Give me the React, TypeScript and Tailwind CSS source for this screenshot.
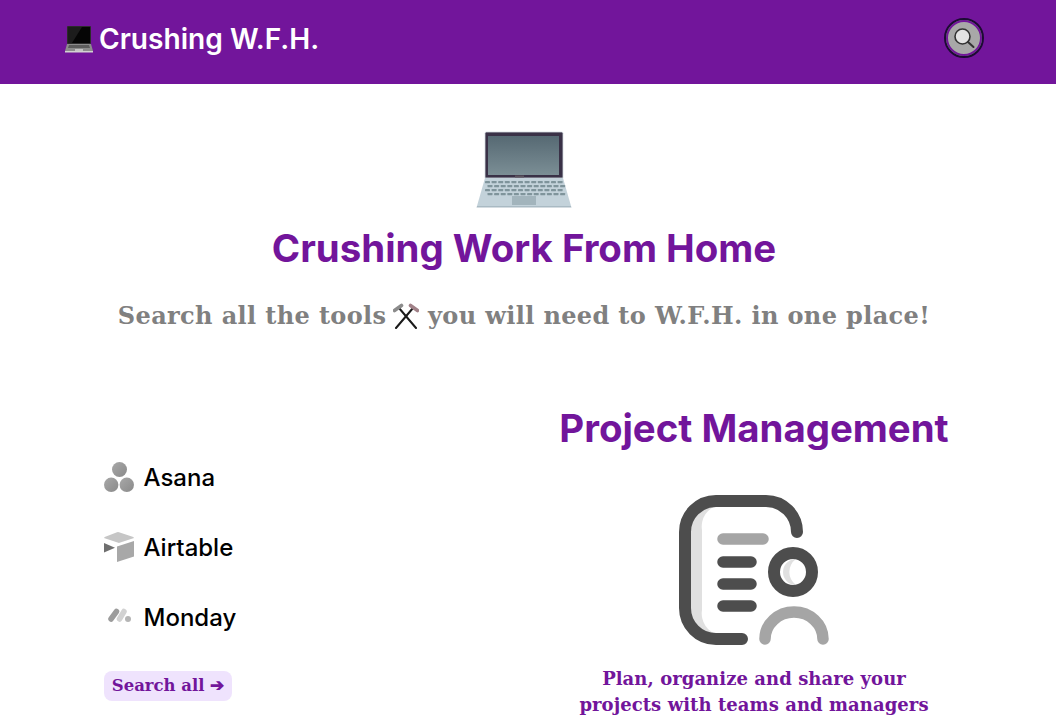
import React from 'react';

const serif = "font-['DejaVu_Serif',serif]";

const LaptopDark = () => (
  <svg className="w-[30px] h-[30px]" viewBox="0 0 30 30">
    <rect x="3" y="2" width="24" height="18" rx="1" fill="#2b2b2b" />
    <rect x="4" y="3" width="22" height="16" fill="#050505" />
    <path d="M4 3h14L8 19H4z" fill="#1c1c1c" />
    <path d="M3 20h24l2 7H1z" fill="#8c8c8c" />
    <path d="M5 21h20l1 3H4z" fill="#5c5c5c" />
    <rect x="11" y="25" width="8" height="2" fill="#c4c4c4" />
    <rect x="1" y="27" width="28" height="1.5" fill="#d2d2d2" />
  </svg>
);

const LaptopBig = () => (
  <svg className="w-24 h-20" viewBox="0 0 96 80">
    <defs>
      <linearGradient id="screen" x1="0" y1="0" x2="0" y2="1">
        <stop offset="0" stopColor="#566973" />
        <stop offset="1" stopColor="#7b8e95" />
      </linearGradient>
    </defs>
    <path d="M9 5.5a1.5 1.5 0 0 1 1.5-1.5h75a1.5 1.5 0 0 1 1.5 1.5V50H9z" fill="#3a3147" stroke="#d4dde2" strokeWidth="0.8" />
    <rect x="12" y="8" width="71" height="39" fill="url(#screen)" />
    <rect x="39" y="47.5" width="9" height="2" fill="#5d5560" />
    <path d="M9 50h78l8 28H1z" fill="#c3d2da" />
    <path d="M1 78h94l0.5 1.5H0.5z" fill="#a9bac3" />
    <g fill="#7f949b">
      {[53, 57, 61, 65].map((y, r) =>
        Array.from({ length: 12 }).map((_, i) => (
          <rect key={`${r}-${i}`} x={9 + (r % 2) * 2.5 + i * 6.6} y={y} width="5" height="2.2" rx="0.4" />
        ))
      )}
    </g>
    <rect x="36" y="68" width="24" height="9" fill="#a2b4bc" />
  </svg>
);

const Hammers = () => (
  <svg className="w-[26px] h-[26px] inline-block align-[-5px] -ml-[2px]" viewBox="0 0 26 26">
    <path d="M6 5L23 25" stroke="#1a1a1a" strokeWidth="2" strokeLinecap="round" />
    <path d="M20 5L3 25" stroke="#1a1a1a" strokeWidth="2" strokeLinecap="round" />
    <path d="M1.5 7.5L8.5 2.5" stroke="#8b8b8b" strokeWidth="3.6" strokeLinecap="round" />
    <path d="M24.5 7.5L17.5 2.5" stroke="#a08087" strokeWidth="3.6" strokeLinecap="round" />
  </svg>
);

const SearchIcon = () => (
  <svg className="w-6 h-6" viewBox="0 0 24 24">
    <circle cx="10.5" cy="10.5" r="7.5" fill="#e3e3e3" stroke="#333333" strokeWidth="1.6" />
    <path d="M16 16L21.5 21" stroke="#333333" strokeWidth="2" strokeLinecap="round" />
  </svg>
);

const AsanaLogo = () => (
  <svg className="w-[30px] h-[30px] -mt-[3px]" viewBox="0 0 30 30">
    <defs>
      <linearGradient id="asana" x1="0" y1="0" x2="1" y2="1">
        <stop offset="0" stopColor="#a8a8a8" />
        <stop offset="1" stopColor="#8a8a8a" />
      </linearGradient>
    </defs>
    <circle cx="15.5" cy="7.5" r="7.5" fill="url(#asana)" />
    <circle cx="7.2" cy="22.8" r="7.2" fill="url(#asana)" />
    <circle cx="22.8" cy="22.8" r="7.2" fill="url(#asana)" />
  </svg>
);

const AirtableLogo = () => (
  <svg className="w-[30px] h-[30px] -mt-[3px]" viewBox="0 0 30 30">
    <path d="M13 0.3a3 3 0 0 1 2 0L29.3 5a0.7 0.7 0 0 1 0 1.3L15.5 10.8a2 2 0 0 1-1.2 0L0.7 6.3a0.7 0.7 0 0 1 0-1.3z" fill="#c6c6c6" />
    <path d="M30 9v15.5L13 30V14.5z" fill="#a8a8a8" />
    <path d="M0 11l11 4.7L0 20.5z" fill="#6f6f6f" />
  </svg>
);

const MondayLogo = () => (
  <svg className="w-[30px] h-[30px] -mt-[3px]" viewBox="0 0 30 30">
    <path d="M7 17L12.5 9.5" stroke="#9c9c9c" strokeWidth="5.5" strokeLinecap="round" />
    <path d="M15.5 17L20 9.5" stroke="#d2d2d2" strokeWidth="5.5" strokeLinecap="round" />
    <circle cx="24" cy="17" r="3" fill="#b5b5b5" />
  </svg>
);

const ProjectIcon = () => (
  <svg className="w-[152px] h-[152px]" viewBox="0 0 152 152">
    <path d="M6 37A31 31 0 0 1 37 6L40 10A22 22 0 0 0 23 35V115A22 22 0 0 0 40 140L37 144A31 31 0 0 1 6 113z" fill="#e0e0e0" />
    <path d="M118 37A31 31 0 0 0 87 6H37A31 31 0 0 0 6 37V113A31 31 0 0 0 37 144H63" fill="none" stroke="#4d4d4d" strokeWidth="12" strokeLinecap="round" />
    <path d="M44 44H84" stroke="#a5a5a5" strokeWidth="11.5" strokeLinecap="round" />
    <path d="M44 67H72M44 89H72M44 111H72" stroke="#4d4d4d" strokeWidth="11.5" strokeLinecap="round" />
    <path d="M117 64A13 13 0 0 0 117 90A16 16 0 0 1 117 64z" fill="#e0e0e0" />
    <circle cx="114" cy="77" r="19" fill="none" stroke="#4d4d4d" strokeWidth="12" />
    <path d="M86 144A29 27 0 0 1 144 144" fill="none" stroke="#a5a5a5" strokeWidth="11.5" strokeLinecap="round" />
  </svg>
);

const tools = [
  { name: 'Asana', logo: <AsanaLogo /> },
  { name: 'Airtable', logo: <AirtableLogo /> },
  { name: 'Monday', logo: <MondayLogo /> },
];

const App: React.FC = () => {
  return (
    <div className="min-h-screen bg-white font-['Inter',sans-serif] overflow-hidden">
      <header className="h-[84px] bg-[#72159b] flex items-center justify-between pl-16 pr-[72px]">
        <div className="flex items-center gap-[5px] pb-[6px]">
          <LaptopDark />
          <span className="text-[28.1px] font-semibold text-white">Crushing W.F.H.</span>
        </div>
        <button className="w-10 h-10 rounded-full bg-[#a8a8a8] border-2 border-[#1c0b33] flex items-center justify-center -mt-[8px] ring-2 ring-inset ring-[#72159b]">
          <SearchIcon />
        </button>
      </header>

      <section className="flex flex-col items-center pt-11 pr-2">
        <LaptopBig />
        <h1 className="text-[38.4px] leading-[46px] font-bold text-[#72159b] mt-[17px]">Crushing Work From Home</h1>
        <p className={`${serif} text-2xl font-bold text-[#808080] mt-[29px] tracking-[0.37px]`}>
          Search all the tools <Hammers /> you will need to W.F.H. in one place!
        </p>
      </section>

      <section className="flex mt-[73px] pl-[104px]">
        <div className="w-[424px] pt-[58px]">
          <ul className="flex flex-col gap-10">
            {tools.map(tool => (
              <li key={tool.name} className="flex items-center gap-[9.5px] h-[30px]">
                {tool.logo}
                <span className="text-2xl font-medium text-black">{tool.name}</span>
              </li>
            ))}
          </ul>
          <button className={`${serif} mt-[38px] h-[30px] w-32 rounded-lg bg-[#efe3fd] text-[#72159b] text-[16.5px] font-bold`}>
            Search all ➔
          </button>
        </div>
        <div className="w-[452px] flex flex-col items-center">
          <h2 className="text-[38.4px] leading-[46px] font-bold text-[#72159b]">Project Management</h2>
          <div className="mt-[44px] ml-[2px] flex">
            <ProjectIcon />
          </div>
          <p className={`${serif} text-lg leading-[26px] font-bold text-[#72159b] text-center mt-[19px] tracking-[0.06px]`}>
            Plan, organize and share your<br />projects with teams and managers
          </p>
        </div>
      </section>
    </div>
  );
};

export default App;
